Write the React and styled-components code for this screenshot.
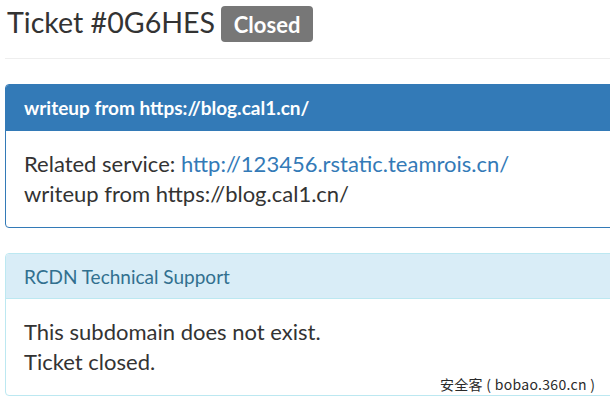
import React from "react";
import styled, { createGlobalStyle } from "styled-components";

const Global = createGlobalStyle`
  html, body { margin: 0; padding: 0; background: #fff; }
  body {
    font-family: Lato, "Noto Sans", "Liberation Sans", sans-serif;
    color: #333;
    overflow: hidden;
  }
`;

const Page = styled.div`
  position: relative;
  width: 610px;
  height: 401px;
  overflow: hidden;
  padding: 0 0 0 5px;
  box-sizing: border-box;
`;

const Header = styled.div`
  display: flex;
  align-items: flex-start;
  gap: 6px;
  padding: 4px 0 0 2px;
  height: 59px;
  box-sizing: border-box;
  border-bottom: 1px solid #eee;
  margin-right: -10px;
`;

const Title = styled.h1`
  margin: 0;
  font-size: 28.6px;
  font-weight: 400;
  line-height: 36px;
  color: #333;
`;

const Badge = styled.span`
  display: inline-flex;
  align-items: center;
  justify-content: center;
  margin-top: 2px;
  width: 92px;
  height: 36px;
  border-radius: 4px;
  background: #777;
  color: #fff;
  font-weight: 700;
  font-size: 22px;
`;

const Panel = styled.div`
  margin-top: ${(p) => p.$mt}px;
  width: 640px;
  border: 1px solid ${(p) => (p.$variant === "info" ? "#bce8f1" : "#337ab7")};
  border-radius: 4px;
  box-sizing: border-box;
  background: #fff;
  overflow: hidden;
`;

const PanelHeading = styled.div`
  height: ${(p) => (p.$variant === "info" ? 45 : 46)}px;
  box-sizing: border-box;
  padding: 0 18px;
  display: flex;
  align-items: center;
  font-size: 19px;
  font-weight: ${(p) => (p.$variant === "info" ? 400 : 700)};
  background: ${(p) => (p.$variant === "info" ? "#d9edf7" : "#337ab7")};
  color: ${(p) => (p.$variant === "info" ? "#31708f" : "#fff")};
  border-bottom: 1px solid ${(p) => (p.$variant === "info" ? "#bce8f1" : "#337ab7")};
`;

const PanelBody = styled.div`
  padding: 18px 18px;
  font-size: 22px;
  line-height: 30px;
  color: #333;
`;

const Link = styled.a`
  color: #337ab7;
  text-decoration: none;
`;

const Watermark = styled.div`
  position: absolute;
  left: 440px;
  top: 375px;
  white-space: nowrap;
  font-family: "Noto Sans CJK SC", "Liberation Sans", sans-serif;
  font-size: 14px;
  line-height: 18px;
  letter-spacing: 0.3px;
  color: #2a2a2a;
  text-shadow: 0 0 2px #fff, 0 0 1px #fff;
`;

export default function App() {
  return (
    <>
      <Global />
      <Page>
        <Header>
          <Title>Ticket #0G6HES</Title>
          <Badge>Closed</Badge>
        </Header>
        <Panel $mt={25}>
          <PanelHeading>writeup from https://blog.cal1.cn/</PanelHeading>
          <PanelBody>
            Related service: <Link href="#">http://123456.rstatic.teamrois.cn/</Link>
            <br />
            writeup from https://blog.cal1.cn/
          </PanelBody>
        </Panel>
        <Panel $mt={25} $variant="info">
          <PanelHeading $variant="info">RCDN Technical Support</PanelHeading>
          <PanelBody>
            This subdomain does not exist.
            <br />
            Ticket closed.
          </PanelBody>
        </Panel>
        <Watermark>安全客 ( bobao.360.cn )</Watermark>
      </Page>
    </>
  );
}
